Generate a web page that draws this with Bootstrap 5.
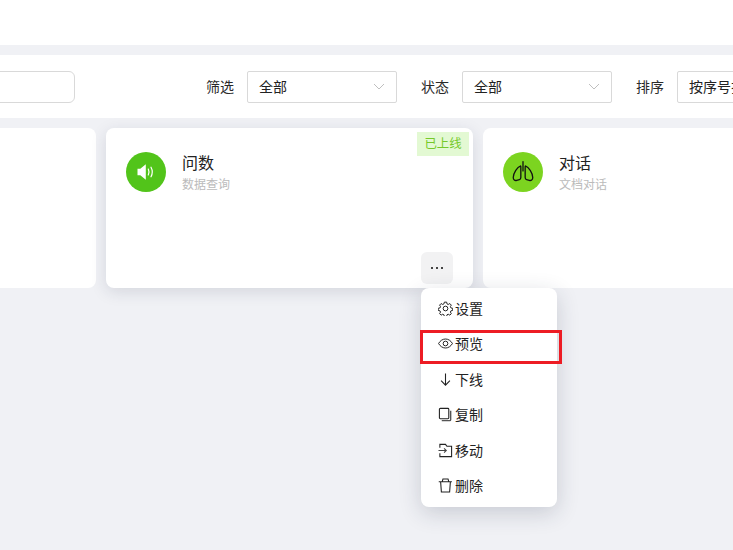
<!DOCTYPE html>
<html lang="zh-CN">
<head>
<meta charset="utf-8">
<title>应用列表</title>
<link href="https://cdn.jsdelivr.net/npm/bootstrap@5.3.0/dist/css/bootstrap.min.css" rel="stylesheet">
<style>
html,body{height:100%;}
body{background:#f0f1f5;overflow:hidden;font-family:"Liberation Sans","Noto Sans CJK SC",sans-serif;font-size:14px;color:#222;}
.app-top{height:45px;background:#fff;}
.app-filter{height:63px;background:#fff;margin-top:10px;width:1100px;margin-left:-271px;padding-left:0;}
.app-search{width:346px;height:32px;border:1px solid #d9d9d9;border-radius:6px;background:#fff;margin-right:131px;flex:none;}
.app-label{width:28px;flex:none;margin-right:13px;white-space:nowrap;color:#2a2a2a;padding-top:1px;}
.app-select{width:150px;height:32px;border:1px solid #d9d9d9;border-radius:2px;padding:1px 11px 0;margin-right:24px;flex:none;color:#222;white-space:nowrap;overflow:hidden;}
.app-chevron{width:12px;height:8px;margin-left:auto;margin-right:0;flex:none;}
.app-grid{margin-top:10px;margin-left:-271px;width:1200px;gap:10px;}
.app-card{width:367px;height:160px;flex:none;background:#fff;border:0;border-radius:8px;position:relative;padding:24px 20px;}
.app-card-hover{box-shadow:0 4px 16px rgba(30,40,70,.13);}
.app-avatar{width:40px;height:40px;border-radius:50%;flex:none;margin-right:16px;}
.bg-speaker{background:#52c41a;}
.bg-lungs{background:#7cd420;}
.app-title{font-size:16px;line-height:22px;color:#222;padding-top:1px;}
.app-sub{font-size:12px;line-height:18px;color:#bbb;margin-top:1px;}
.app-tag{position:absolute;top:4px;right:4px;width:52px;height:24px;line-height:25px;text-align:center;background:#e3f9d3;color:#76c92a;font-size:12.400px;}
.app-more-wrap{position:absolute;left:315px;top:124px;}
.app-more{width:32px;height:32px;background:#f2f2f3;border:0;border-radius:6px;padding:0;color:#333;line-height:1;}
.app-menu{display:block;top:36px;left:0;width:136px;min-width:136px;height:219px;padding:3.500px 0 2.500px;margin:0;border:0;border-radius:8px;box-shadow:0 6px 22px rgba(30,40,70,.19);}
.app-menu-item{height:35.500px;padding:0 16px 0 16.500px;display:flex;align-items:center;font-size:14px;color:#222;position:relative;white-space:nowrap;}
.app-menu-item svg{width:15px;height:15px;flex:none;margin-right:2.500px;margin-top:-2px;}
.app-mark{position:absolute;left:-1px;top:3px;width:142px;height:34px;border:3px solid #ed1c24;pointer-events:none;}
.app-dots{display:flex;gap:3px;justify-content:center;}
.app-dots i{width:2px;height:2px;background:#444;display:block;}
</style>
</head>
<body>
<div class="app-top"></div>
<div class="app-filter d-flex align-items-center">
  <div class="app-search"></div>
  <span class="app-label">筛选</span>
  <div class="app-select d-flex align-items-center">全部<svg class="app-chevron" viewBox="0 0 12 8"><path d="M1 1 6 6 11 1" fill="none" stroke="#bfbfbf" stroke-width="1"/></svg></div>
  <span class="app-label">状态</span>
  <div class="app-select d-flex align-items-center">全部<svg class="app-chevron" viewBox="0 0 12 8"><path d="M1 1 6 6 11 1" fill="none" stroke="#bfbfbf" stroke-width="1"/></svg></div>
  <span class="app-label">排序</span>
  <div class="app-select d-flex align-items-center">按序号排序</div>
</div>
<div class="app-grid d-flex">
  <div class="card app-card"></div>
  <div class="card app-card app-card-hover">
    <span class="app-tag">已上线</span>
    <div class="d-flex">
      <div class="app-avatar bg-speaker d-flex align-items-center justify-content-center">
        <svg width="20" height="20" viewBox="0 0 20 20"><path d="M1.500 6.800h2.800L9.800 2.200v15.600L4.300 13.200H1.500z" fill="#fff"/><path d="M12.300 7c.9 1.900.9 4.100 0 6M15 5.200c1.600 3 1.600 6.600 0 9.600" fill="none" stroke="#fff" stroke-width="1.200" stroke-linecap="round"/></svg>
      </div>
      <div>
        <div class="app-title">问数</div>
        <div class="app-sub">数据查询</div>
      </div>
    </div>
    <div class="app-more-wrap">
      <button type="button" class="btn app-more"><span class="app-dots"><i></i><i></i><i></i></span></button>
      <div class="dropdown-menu app-menu">
        <div class="app-menu-item"><svg viewBox="0 0 16 16" fill="none" stroke="#222" stroke-width="1.050"><path d="M6.800 1.200h2.400l.4 1.900 1.300.6 1.700-1 1.600 1.700-1 1.600.6 1.400 1.900.4v2.200l-1.900.5-.6 1.300 1 1.700-1.600 1.600-1.700-1-1.300.6-.4 1.900H6.800l-.5-1.900-1.300-.6-1.700 1-1.600-1.600 1-1.700-.6-1.300-1.900-.5V7.800l1.900-.4.6-1.400-1-1.600L3.300 2.700l1.700 1 1.300-.6z"/><circle cx="8" cy="8" r="2.500"/></svg>设置</div>
        <div class="app-menu-item"><svg viewBox="0 0 16 16" fill="none" stroke="#222" stroke-width="1.050"><path d="M.6 8C2.300 5 5 3.200 8 3.200S13.700 5 15.400 8C13.700 11 11 12.800 8 12.800S2.300 11 .6 8z"/><circle cx="8" cy="8" r="2.500"/></svg>预览<span class="app-mark"></span></div>
        <div class="app-menu-item"><svg viewBox="0 0 16 16" fill="none" stroke="#222" stroke-width="1.150"><path d="M8 1.500v12.500M3.300 9.300 8 14l4.700-4.700"/></svg>下线</div>
        <div class="app-menu-item"><svg viewBox="0 0 16 16" fill="none" stroke="#222" stroke-width="1.150"><rect x="1.500" y="1.500" width="10" height="11" rx="1"/><path d="M13.500 4v9.500a1 1 0 0 1-1 1H4" stroke="#555" stroke-width="1.500"/></svg>复制</div>
        <div class="app-menu-item"><svg viewBox="0 0 16 16" fill="none" stroke="#222" stroke-width="1.150"><path d="M2 5V1.500h6l1.500 2h5v11H2V11"/><path d="M.5 8h8M6.500 5.800 8.800 8l-2.300 2.200" stroke="#444"/></svg>移动</div>
        <div class="app-menu-item"><svg viewBox="0 0 16 16" fill="none" stroke="#222" stroke-width="1.150"><path d="M.8 4h14M4.500 4l.8-3h5.400l.8 3M2.800 4l.8 11h8.800l.8-11"/></svg>删除</div>
      </div>
    </div>
  </div>
  <div class="card app-card">
    <div class="d-flex">
      <div class="app-avatar bg-lungs d-flex align-items-center justify-content-center">
        <svg width="26" height="26" viewBox="0 0 24 24" fill="none" stroke="#111" stroke-width="1.200" stroke-linecap="round" stroke-linejoin="round"><path d="M12 2.500v8.500"/><path d="M9.500 6.500C7 7.100 3 13 3 17c0 2.300 1.500 3.200 3.200 2.700l2.500-.7c1-.3 1.300-1 1.300-2V8C10 7 10 6.400 9.500 6.500z"/><path d="M14.500 6.500C17 7.100 21 13 21 17c0 2.300-1.500 3.200-3.200 2.700l-2.500-.7c-1-.3-1.300-1-1.300-2V8C14 7 14 6.400 14.500 6.500z"/></svg>
      </div>
      <div>
        <div class="app-title">对话</div>
        <div class="app-sub">文档对话</div>
      </div>
    </div>
  </div>
</div>
<script src="https://cdn.jsdelivr.net/npm/bootstrap@5.3.0/dist/js/bootstrap.bundle.min.js"></script>
</body>
</html>
